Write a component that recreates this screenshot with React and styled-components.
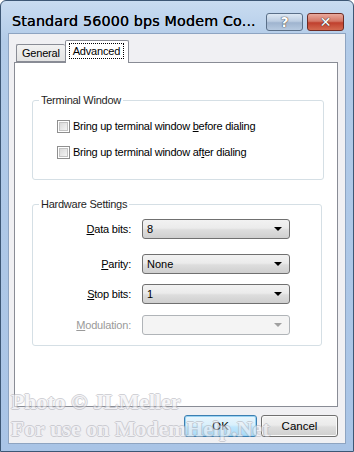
import styled, { createGlobalStyle } from "styled-components";

const Global = createGlobalStyle`
  html, body { margin: 0; padding: 0; background: #fff; }
  body { font-family: "Liberation Sans", Arial, sans-serif; font-size: 11px; color: #000; }
`;

const Window = styled.div`
  position: relative;
  width: 354px;
  height: 452px;
  box-sizing: border-box;
  border: 1px solid #3d5775;
  border-radius: 6px 6px 0 0;
  background: linear-gradient(180deg, #c9dcf1 0%, #b2cbe8 40px, #a9c4e6 100%);
  display: flex;
  flex-direction: column;
  overflow: hidden;
`;

const TitleBar = styled.div`
  height: 32px;
  display: flex;
  align-items: center;
  padding: 0 9px 0 11px;
  gap: 4px;
`;

const Title = styled.div`
  flex: 1;
  min-width: 0;
  font-family: "DejaVu Sans", sans-serif;
  font-size: 14.3px;
  padding-top: 8px;
  color: #000;
  white-space: nowrap;
  letter-spacing: 0.15px;
  text-shadow: 0 0 0.4px #000;
`;

const CaptionButton = styled.div`
  flex-shrink: 0;
  width: 37px;
  height: 18px;
  margin-top: 9px;
  box-sizing: border-box;
  border: 1px solid ${(p) => (p.close ? "#6e2b24" : "#5a6f88")};
  border-radius: 3px;
  background: ${(p) =>
    p.close
      ? "linear-gradient(180deg, #e9a99c 0%, #d47766 45%, #c0402e 55%, #d46a50 100%)"
      : "linear-gradient(180deg, #dde8f4 0%, #bccde2 45%, #9fb4cf 55%, #b6c9e0 100%)"};
  display: flex;
  align-items: center;
  justify-content: center;
  color: #fff;
  font-family: "DejaVu Sans", sans-serif;
  font-weight: bold;
  font-size: 14px;
  text-shadow: 0 0 1px #333, 0 0 1px #333;
`;

const Client = styled.div`
  flex: 1;
  margin: 0 7px 7px 7px;
  background: #f0f0f3;
  border: 1px solid #8ea4c1;
  padding: 6px 7px 0 5px;
  display: flex;
  flex-direction: column;
`;

const TabRow = styled.div`
  display: flex;
  align-items: flex-end;
  height: 22px;
  padding-left: 2px;
  position: relative;
  z-index: 1;
`;

const Tab = styled.div`
  box-sizing: border-box;
  height: ${(p) => (p.active ? "23px" : "18px")};
  padding: ${(p) => (p.active ? "2px 4px 0 3px" : "2px 5px 0 5px")};
  margin-bottom: ${(p) => (p.active ? "-1px" : "0")};
  border: 1px solid #898c95;
  border-bottom: ${(p) => (p.active ? "none" : "1px solid #898c95")};
  border-radius: 2px 2px 0 0;
  background: ${(p) =>
    p.active ? "#fff" : "linear-gradient(180deg, #f2f2f2 0%, #e3e3e3 100%)"};
  font-size: 11px;
  letter-spacing: -0.2px;
  ${(p) => (p.active ? "" : "border-right: none;")}
`;

const FocusText = styled.span`
  display: inline-block;
  border: 1px dotted #000;
  padding: 0 3px;
  line-height: 14px;
`;

const Panel = styled.div`
  height: 345px;
  box-sizing: border-box;
  background: #fff;
  border: 1px solid #898c95;
  padding: 37px 13px 0 17px;
  display: flex;
  flex-direction: column;
`;

const Group = styled.div`
  position: relative;
  border: 1px solid #d5dfe5;
  border-radius: 3px;
  height: ${(p) => p.h}px;
  box-sizing: border-box;
  margin-top: ${(p) => p.mt || 0}px;
  margin-right: ${(p) => p.mr || 0}px;
`;

const Legend = styled.span`
  position: absolute;
  top: -8px;
  left: 6px;
  background: #fff;
  padding: 0 2px;
  font-size: 11px;
  letter-spacing: -0.25px;
  line-height: 14px;
  color: #1f1f1f;
`;

const CheckList = styled.div`
  display: flex;
  flex-direction: column;
  gap: 13px;
  padding: 19px 0 0 24px;
`;

const CheckRow = styled.label`
  display: flex;
  align-items: center;
  gap: 3px;
  font-size: 11px;
  letter-spacing: -0.25px;
  line-height: 13px;
`;

const Box = styled.span`
  width: 13px;
  height: 13px;
  box-sizing: border-box;
  border: 1px solid #8f8f8f;
  background: #fff;
  padding: 1px;
  display: flex;
  &::after {
    content: "";
    flex: 1;
    background: linear-gradient(135deg, #d9d9d9 0%, #f4f4f4 100%);
    border: 1px solid #c3c3c3;
  }
`;

const Fields = styled.div`
  display: flex;
  flex-direction: column;
  padding: 14px 0 0 0;
`;

const FieldRow = styled.div`
  display: flex;
  align-items: center;
  margin-top: ${(p) => p.mt}px;
`;

const FieldLabel = styled.span`
  width: 98px;
  text-align: right;
  font-size: 11px;
  letter-spacing: -0.2px;
  color: ${(p) => (p.disabled ? "#9a9a9a" : "#000")};
  margin-right: 11px;
`;

const Combo = styled.div`
  width: 148px;
  height: 20px;
  box-sizing: border-box;
  border: 1px solid ${(p) => (p.disabled ? "#b0b4b8" : "#707070")};
  border-radius: 3px;
  background: ${(p) =>
    p.disabled
      ? "#f4f4f4"
      : "linear-gradient(180deg, #f2f2f2 0%, #ebebeb 45%, #dddddd 55%, #cfcfcf 100%)"};
  display: flex;
  align-items: center;
  padding: 0 7px 0 4px;
  font-size: 11px;
`;

const ComboText = styled.span`
  flex: 1;
`;

const Arrow = styled.span`
  width: 0;
  height: 0;
  border-left: 4px solid transparent;
  border-right: 4px solid transparent;
  border-top: 4px solid ${(p) => (p.disabled ? "#a0a0a0" : "#000")};
`;

const Footer = styled.div`
  display: flex;
  justify-content: flex-end;
  gap: 4px;
  padding-top: 8px;
`;

const Button = styled.div`
  width: ${(p) => p.w}px;
  height: 22px;
  box-sizing: border-box;
  border: 1px solid ${(p) => (p.primary ? "#3c7fb1" : "#707070")};
  border-radius: 3px;
  background: ${(p) =>
    p.primary
      ? "linear-gradient(180deg, #eaf6fd 0%, #d9f0fc 45%, #bee6fd 55%, #a7d9f5 100%)"
      : "linear-gradient(180deg, #f2f2f2 0%, #ebebeb 45%, #dddddd 55%, #cfcfcf 100%)"};
  box-shadow: ${(p) => (p.primary ? "inset 0 0 0 1px #9ad3f3" : "inset 0 0 0 1px #fafafa")};
  display: flex;
  align-items: center;
  justify-content: center;
  font-size: 11.5px;
`;

const Watermark = styled.div`
  position: absolute;
  left: 10px;
  top: ${(p) => p.top}px;
  font-family: "Liberation Serif", serif;
  font-weight: bold;
  font-size: 21.5px;
  line-height: 22px;
  color: #f1f1f5;
  letter-spacing: 0.2px;
  text-shadow: -1px 0 #b4b4bb, 1px 0 #b4b4bb, 0 -1px #b4b4bb, 0 1px #b4b4bb;
  opacity: 0.6;
  pointer-events: none;
  white-space: nowrap;
`;

const fields = [
  { label: <><u>D</u>ata bits:</>, value: "8", mt: 0 },
  { label: <><u>P</u>arity:</>, value: "None", mt: 15 },
  { label: <><u>S</u>top bits:</>, value: "1", mt: 10 },
  { label: <><u>M</u>odulation:</>, value: "", mt: 11, disabled: true },
];

export default function App() {
  return (
    <>
      <Global />
      <Window>
        <TitleBar>
          <Title>Standard 56000 bps Modem Co...</Title>
          <CaptionButton>?</CaptionButton>
          <CaptionButton close>✕</CaptionButton>
        </TitleBar>
        <Client>
          <TabRow>
            <Tab>General</Tab>
            <Tab active>
              <FocusText>Advanced</FocusText>
            </Tab>
          </TabRow>
          <Panel>
            <Group h={80}>
              <Legend>Terminal Window</Legend>
              <CheckList>
                <CheckRow>
                  <Box />
                  <span>Bring up terminal window <u>b</u>efore dialing</span>
                </CheckRow>
                <CheckRow>
                  <Box />
                  <span>Bring up terminal window af<u>t</u>er dialing</span>
                </CheckRow>
              </CheckList>
            </Group>
            <Group h={142} mt={24} mr={2}>
              <Legend>Hardware Settings</Legend>
              <Fields>
                {fields.map((f, i) => (
                  <FieldRow key={i} mt={f.mt}>
                    <FieldLabel disabled={f.disabled}>{f.label}</FieldLabel>
                    <Combo disabled={f.disabled}>
                      <ComboText>{f.value}</ComboText>
                      <Arrow disabled={f.disabled} />
                    </Combo>
                  </FieldRow>
                ))}
              </Fields>
            </Group>
          </Panel>
          <Footer>
            <Button primary w={73}>OK</Button>
            <Button w={77}>Cancel</Button>
          </Footer>
        </Client>
        <Watermark top={390}>Photo © JLMeller</Watermark>
        <Watermark top={417}>For use on ModemHelp.Net</Watermark>
      </Window>
    </>
  );
}
